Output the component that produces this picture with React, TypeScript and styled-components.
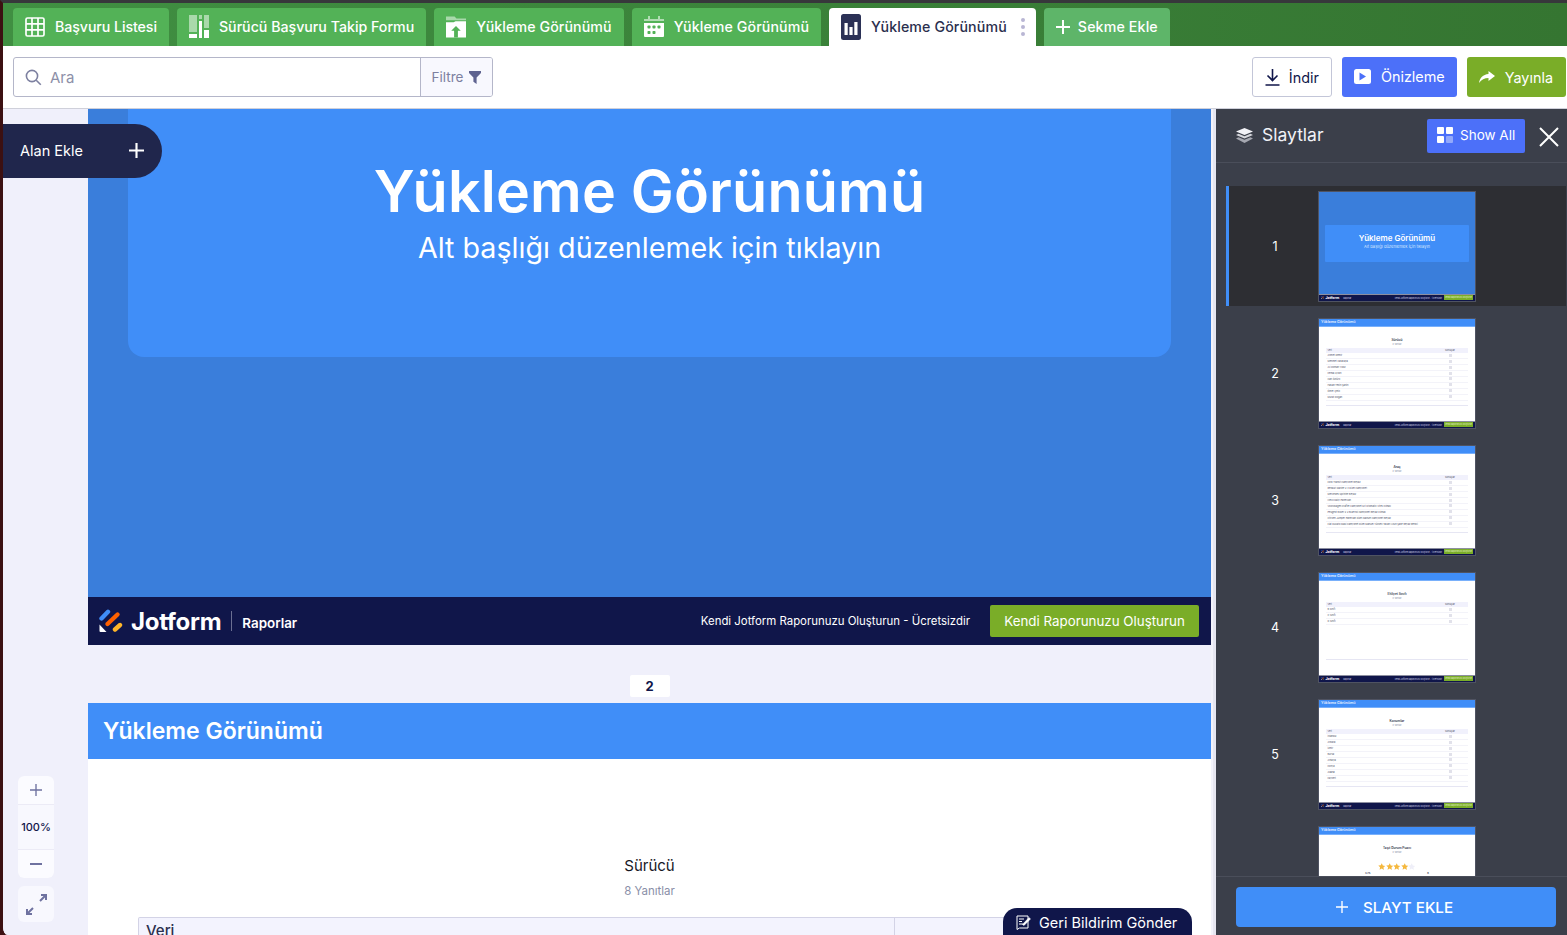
import React from 'react';
import styled, { createGlobalStyle } from 'styled-components';

const GlobalStyle = createGlobalStyle`
  * {
    box-sizing: border-box;
  }

  html,
  body {
    margin: 0;
    padding: 0;
    height: 100%;
    overflow: hidden;
    background-color: #3c1012;
    font-family: Inter, "Noto Sans", "Liberation Sans", sans-serif;
  }
`;

const COLOUR = {
  navy: '#10164a',
  navy2: '#20264c',
  blue: '#408ef8',
  blueDark: '#3a7edb',
  indigo: '#4c70f9',
  green: '#7aad28',
  tabGreen: '#53b257',
  canvas: '#f0f0fb',
  panel: '#3b3f4a',
  muted: '#8a8fa8',
};

const Frame = styled.div`
  width: 1567px;
  height: 935px;
  display: flex;
  flex-direction: column;
  overflow: hidden;
  border-top: 3px solid #37373b;
  border-left: 3px solid #3c1012;
  border-bottom-left-radius: 8px;
  background-color: ${COLOUR.canvas};
`;

/* tabs */

const TabBar = styled.nav`
  height: 43px;
  flex: none;
  display: flex;
  align-items: flex-end;
  gap: 8px;
  padding-left: 10px;
  background: linear-gradient(90deg, #408f42 0%, #357531 100%);
`;

const Tab = styled.div<{ $active?: boolean; $add?: boolean; $track?: number }>`
  height: 38px;
  display: flex;
  align-items: center;
  gap: ${(p) => (p.$add ? '8px' : '10px')};
  padding: 0 12px 1px;
  border-radius: 4px 4px 0 0;
  font-size: 14.2px;
  font-weight: 500;
  letter-spacing: ${(p) => p.$track ?? 0}px;
  white-space: nowrap;
  color: ${(p) => (p.$active ? '#2b2f4e' : '#fff')};
  background-color: ${(p) =>
    p.$active ? '#fff' : p.$add ? '#5eb569' : COLOUR.tabGreen};
`;

const TabDots = styled.span`
  display: flex;
  flex-direction: column;
  gap: 3px;
  margin-left: 4px;
  margin-right: -1px;

  & > i {
    width: 4px;
    height: 4px;
    border-radius: 50%;
    background-color: #b9b6d4;
  }
`;

/* toolbar */

const Toolbar = styled.header`
  height: 63px;
  flex: none;
  display: flex;
  align-items: center;
  justify-content: space-between;
  padding: 0 1px 0 10px;
  background-color: #fff;
  border-bottom: 1px solid #cfd0da;
`;

const SearchBox = styled.div`
  width: 480px;
  height: 40px;
  display: flex;
  border: 1px solid #b4b6c9;
  border-radius: 3px;
  overflow: hidden;
`;

const SearchField = styled.div`
  flex: 1;
  display: flex;
  align-items: center;
  gap: 8px;
  padding-left: 11px;
  font-size: 15px;
  color: #8d90a8;
`;

const FilterButton = styled.div`
  width: 72px;
  display: flex;
  align-items: center;
  justify-content: center;
  gap: 6px;
  font-size: 13.5px;
  color: #7d80a0;
  background-color: #f8f8fe;
  border-left: 1px solid #b4b6c9;
`;

const ToolbarActions = styled.div`
  display: flex;
  gap: 10px;
`;

const ActionButton = styled.div<{ $kind: 'outline' | 'indigo' | 'green' }>`
  height: 40px;
  display: flex;
  align-items: center;
  gap: ${(p) => (p.$kind === 'outline' ? '9px' : '10px')};
  padding: 0 ${(p) => (p.$kind === 'green' ? '13px' : '12px')}
    ${(p) => (p.$kind === 'indigo' ? '2px' : '0')} 12px;
  border-radius: 3px;
  font-size: 14.4px;
  color: ${(p) => (p.$kind === 'outline' ? COLOUR.navy : '#fff')};
  border: ${(p) => (p.$kind === 'outline' ? '1px solid #c3c6d8' : 'none')};
  background-color: ${(p) =>
    p.$kind === 'outline'
      ? '#fff'
      : p.$kind === 'indigo'
        ? COLOUR.indigo
        : COLOUR.green};
`;

/* main */

const Body = styled.div`
  flex: 1;
  min-height: 0;
  display: flex;
`;

const Canvas = styled.main`
  position: relative;
  width: 1208px;
  flex: none;
  padding-left: 85px;
  overflow: hidden;
  background-color: ${COLOUR.canvas};
`;

const Divider = styled.div`
  width: 5px;
  flex: none;
  background-color: #e6e6f1;
  border-left: 2px solid #f3f3fb;
`;

const SlideOne = styled.section`
  width: 1123px;
  height: 536px;
  display: flex;
  flex-direction: column;
  background-color: ${COLOUR.blueDark};
`;

const SlideStage = styled.div`
  flex: 1;
  padding: 0 40px;
`;

const TitleCard = styled.div`
  height: 248px;
  padding-top: 45px;
  text-align: center;
  color: #fff;
  background-color: ${COLOUR.blue};
  border-radius: 0 0 16px 16px;
`;

const SlideTitle = styled.h1`
  margin: 0;
  font-size: 57.4px;
  line-height: 74px;
  font-weight: 600;
  letter-spacing: 0.2px;
`;

const SlideSubtitle = styled.p`
  margin: 2px 0 0;
  font-size: 28.7px;
  line-height: 36px;
  font-weight: 400;
`;

const ReportFooter = styled.footer`
  height: 48px;
  flex: none;
  display: flex;
  align-items: center;
  padding: 0 12px 0 11px;
  color: #fff;
  background-color: ${COLOUR.navy};
`;

const BrandName = styled.span`
  margin-left: 8px;
  font-size: 24px;
  font-weight: 700;
  letter-spacing: -0.3px;
`;

const BrandTag = styled.span`
  height: 20px;
  margin-left: 10px;
  padding: 2px 0 0 10px;
  border-left: 1px solid #6b6f92;
  font-size: 13.4px;
  line-height: 20px;
  font-weight: 600;
`;

const FooterNote = styled.span`
  margin-left: auto;
  font-size: 11.4px;
`;

const FooterButton = styled.div`
  width: 209px;
  height: 32px;
  margin-left: 20px;
  display: flex;
  align-items: center;
  justify-content: center;
  border-radius: 2px;
  font-size: 13.35px;
  background-color: ${COLOUR.green};
`;

const PageRow = styled.div`
  height: 58px;
  display: flex;
  justify-content: center;
  padding-top: 30px;
  width: 1123px;
`;

const PageBadge = styled.div`
  width: 40px;
  height: 22px;
  display: flex;
  align-items: center;
  justify-content: center;
  font-size: 13px;
  font-weight: 700;
  color: ${COLOUR.navy};
  background-color: #fff;
  border-radius: 2px;
`;

const SlideTwo = styled.section`
  width: 1123px;
  height: 400px;
  background-color: #fff;
`;

const SlideHeader = styled.div`
  height: 56px;
  display: flex;
  align-items: center;
  padding-left: 15px;
  font-size: 23px;
  font-weight: 600;
  color: #fff;
  background-color: ${COLOUR.blue};
`;

const QuestionTitle = styled.h2`
  margin: 96px 0 0;
  text-align: center;
  font-size: 15px;
  line-height: 22px;
  font-weight: 400;
  color: #17171f;
`;

const QuestionCount = styled.p`
  margin: 7px 0 0;
  text-align: center;
  font-size: 11.5px;
  line-height: 14px;
  color: ${COLOUR.muted};
`;

const DataTable = styled.div`
  margin: 19px 50px 0;
  display: grid;
  grid-template-columns: 756px 1fr;
  height: 60px;
  border: 1px solid #d3d3e6;
  border-bottom: 0;
  border-radius: 2px 2px 0 0;
  background-color: #f3f3fe;
`;

const DataHead = styled.div`
  padding: 4px 7px;
  font-size: 15px;
  line-height: 18px;
  font-weight: 500;
  color: #2b2f4e;
  border-right: 1px solid #d3d3e6;
`;

/* overlays on the canvas */

const AddFieldPill = styled.div`
  position: absolute;
  top: 15px;
  left: 0;
  width: 159px;
  height: 54px;
  display: flex;
  align-items: center;
  justify-content: space-between;
  padding: 0 18px 2px 17px;
  color: #fff;
  font-size: 14.5px;
  background-color: ${COLOUR.navy2};
  border-radius: 0 27px 27px 0;
`;

const ZoomDock = styled.div`
  position: absolute;
  left: 15px;
  bottom: 13px;
  width: 36px;
  display: flex;
  flex-direction: column;
  gap: 8px;
`;

const ZoomGroup = styled.div`
  display: flex;
  flex-direction: column;
  gap: 1px;
  border-radius: 6px;
  overflow: hidden;
  background-color: #ecebf6;
`;

const ZoomCell = styled.div<{ $tall?: boolean; $tint?: boolean }>`
  height: ${(p) => (p.$tall ? '44px' : '28px')};
  display: flex;
  align-items: center;
  justify-content: center;
  font-size: 11px;
  font-weight: 500;
  color: ${COLOUR.navy};
  background-color: ${(p) => (p.$tint ? '#f8f8fe' : '#fbfbff')};
`;

const ExpandButton = styled(ZoomCell)`
  height: 36px;
  border-radius: 6px;
`;

const FeedbackTab = styled.div`
  position: absolute;
  right: 19px;
  bottom: 0;
  width: 189px;
  height: 27px;
  display: flex;
  align-items: center;
  gap: 8px;
  padding: 2px 0 0 13px;
  color: #fff;
  font-size: 14.5px;
  background-color: ${COLOUR.navy};
  border-radius: 14px 14px 0 0;
`;

/* slides panel */

const Panel = styled.aside`
  width: 351px;
  flex: none;
  display: flex;
  flex-direction: column;
  background-color: ${COLOUR.panel};
`;

const PanelHeader = styled.div`
  height: 54px;
  flex: none;
  display: flex;
  align-items: center;
  padding: 0 8px 0 20px;
  border-bottom: 1px solid #4a4e5a;
`;

const PanelTitle = styled.h3`
  margin: 0 auto 2px 9px;
  font-size: 17.5px;
  font-weight: 400;
  color: #f2f2f7;
`;

const ShowAll = styled.div`
  width: 98px;
  height: 34px;
  margin-right: 14px;
  display: flex;
  align-items: center;
  gap: 7px;
  padding: 0 0 1px 10px;
  font-size: 13.5px;
  color: #fff;
  background-color: ${COLOUR.indigo};
  border-radius: 2px;
`;

const CloseGlyph = styled.svg`
  margin-top: 2px;
`;

const SlideList = styled.div`
  flex: 1;
  min-height: 0;
  overflow: hidden;
  display: flex;
  flex-direction: column;
  gap: 7px;
  padding: 23px 1px 0 10px;
`;

const SlideItem = styled.div<{ $current?: boolean }>`
  height: 120px;
  flex: none;
  display: flex;
  align-items: center;
  border-left: 3px solid ${(p) => (p.$current ? COLOUR.blue : 'transparent')};
  background-color: ${(p) => (p.$current ? '#2d2e33' : 'transparent')};
`;

const SlideNumber = styled.span`
  width: 89px;
  padding-left: 3px;
  text-align: center;
  font-size: 12.5px;
  color: #fff;
`;

const PanelFooter = styled.div`
  height: 59px;
  flex: none;
  padding: 10px 11px 9px 20px;
  border-top: 1px solid #4a4e5a;
`;

const AddSlide = styled.div`
  height: 40px;
  display: flex;
  align-items: center;
  justify-content: center;
  gap: 15px;
  padding-right: 3px;
  color: #fff;
  font-size: 15.2px;
  font-weight: 500;
  background-color: ${COLOUR.blue};
  border-radius: 4px;
`;

/* thumbnails */

const Thumb = styled.div<{ $cover?: boolean }>`
  width: 158px;
  height: 111px;
  flex: none;
  display: flex;
  flex-direction: column;
  overflow: hidden;
  border: 1px solid #4f5362;
  background-color: ${(p) => (p.$cover ? COLOUR.blueDark : '#fff')};
`;

const ThumbHeader = styled.div`
  height: 8px;
  flex: none;
  padding-left: 2px;
  font-size: 3.6px;
  line-height: 7px;
  font-weight: 600;
  color: #e8f0ff;
  background-color: ${COLOUR.blue};
  border-bottom: 1px solid #79b0fb;
`;

const ThumbMain = styled.div`
  flex: 1;
  min-height: 0;
  padding: 11.5px 7px 0;
`;

const ThumbTitle = styled.div`
  text-align: center;
  font-size: 3.2px;
  line-height: 4px;
  font-weight: 600;
  color: #30324a;
`;

const ThumbCount = styled.div`
  text-align: center;
  font-size: 2px;
  line-height: 3px;
  margin: 1px 0 1.5px;
  color: ${COLOUR.muted};
`;

const ThumbTable = styled.div`
  height: 58px;
  border-bottom: 1px solid #e6e6f3;
`;

const ThumbRow = styled.div<{ $head?: boolean }>`
  height: 5.9px;
  display: grid;
  grid-template-columns: 106px 1fr;
  align-items: center;
  font-size: 2.4px;
  color: #50526a;
  background-color: ${(p) => (p.$head ? '#f1f1fc' : '#fff')};
  border-bottom: ${(p) => (p.$head ? '0' : '1px solid #f3f3f9')};

  & > span:first-child {
    padding-left: 1.5px;
    white-space: nowrap;
  }

  & > span:last-child {
    text-align: center;
  }
`;

const ThumbValue = styled.b`
  display: inline-block;
  width: 3px;
  height: 3px;
  background-color: #e1e1ea;
`;

const ThumbFooter = styled.div`
  height: 7px;
  flex: none;
  display: flex;
  align-items: center;
  padding: 0 2px;
  font-size: 2px;
  color: #d7d9ea;
  background-color: ${COLOUR.navy};
  border-top: 1px solid #8d8fa0;
`;

const ThumbBrand = styled.span`
  margin-left: 1.5px;
  font-size: 3.6px;
  font-weight: 700;
  color: #fff;
`;

const ThumbTag = styled.span`
  margin-left: 4px;
`;

const ThumbNote = styled.span`
  margin-left: auto;
`;

const ThumbCta = styled.span`
  width: 29px;
  height: 5px;
  margin-left: 2px;
  text-align: center;
  line-height: 5px;
  font-size: 2px;
  color: #e5f1d0;
  background-color: ${COLOUR.green};
`;

const CoverStage = styled.div`
  flex: 1;
  padding: 33px 6px 0;
`;

const CoverCard = styled.div`
  height: 37px;
  padding-top: 9px;
  text-align: center;
  color: #fff;
  background-color: ${COLOUR.blue};
  border-radius: 1px;
`;

const CoverTitle = styled.div`
  font-size: 8px;
  line-height: 9px;
  font-weight: 600;
`;

const CoverSubtitle = styled.div`
  margin-top: 1px;
  font-size: 4.1px;
  line-height: 5px;
  color: #d7e6ff;
`;

const Stars = styled.div`
  display: flex;
  justify-content: center;
  margin-top: 9px;
`;

const RatingRow = styled.div`
  display: flex;
  justify-content: space-between;
  padding: 0 39px;
  font-size: 2.6px;
  font-weight: 600;
  color: #30324a;
`;

/* icons */

const GridIcon = () => (
  <svg width="20" height="20" viewBox="0 0 20 20" fill="none" stroke="#fff" strokeWidth="1.7">
    <rect x="1" y="1" width="18" height="18" rx="1.5" />
    <path d="M1 6.8h18M1 12.8h18M7 1v18M13 1v18" />
  </svg>
);

const ColumnsIcon = () => (
  <svg width="20" height="23" viewBox="0 0 20 23" fill="#fff">
    <rect x="0" y="0" width="8" height="17" opacity=".5" />
    <rect x="0" y="19" width="8" height="4" />
    <rect x="10" y="0" width="3" height="4" opacity=".5" />
    <rect x="10" y="6" width="3" height="17" />
    <rect x="15" y="0" width="5" height="13" opacity=".5" />
    <rect x="15" y="15" width="5" height="8" />
  </svg>
);

const FolderIcon = () => (
  <svg width="20" height="22" viewBox="0 0 21 22">
    <path d="M0 0h9l2 2h10v2H0z" fill="#fff" opacity=".5" />
    <path d="M0 6h8l2-1h11v17H0z" fill="#fff" />
    <path d="M10.5 10l5 5h-3v7h-4v-7h-3z" fill={COLOUR.tabGreen} />
  </svg>
);

const CalendarIcon = () => (
  <svg width="20" height="21" viewBox="0 0 20 21">
    <path d="M0 3h20v2H0z M4 0h2v3H4z M14 0h2v3h-2z" fill="#fff" opacity=".55" />
    <path d="M0 7h20v13a1 1 0 0 1-1 1H1a1 1 0 0 1-1-1z" fill="#fff" />
    <g fill={COLOUR.tabGreen}>
      <rect x="3.5" y="9.5" width="3" height="3" rx=".8" />
      <rect x="8.5" y="9.5" width="3" height="3" rx=".8" />
      <rect x="13.5" y="9.5" width="3" height="3" rx=".8" />
      <rect x="3.5" y="15" width="3" height="3" rx=".8" />
      <rect x="8.5" y="15" width="3" height="3" rx=".8" />
    </g>
  </svg>
);

const ReportIcon = () => (
  <svg width="20" height="26" viewBox="0 0 20 26">
    <rect width="20" height="26" rx="2.5" fill="#2b3156" />
    <rect x="3.5" y="9" width="3.2" height="12" fill="#fff" />
    <rect x="8.4" y="13" width="3.2" height="8" fill="#fff" />
    <rect x="13.3" y="8" width="3.2" height="13" fill="#fff" />
  </svg>
);

const Plus = ({ size = 14, color = '#fff', weight = 2 }: { size?: number; color?: string; weight?: number }) => (
  <svg width={size} height={size} viewBox="0 0 14 14" stroke={color} strokeWidth={weight} fill="none">
    <path d="M7 0v14M0 7h14" />
  </svg>
);

const SearchIcon = () => (
  <svg width="17" height="17" viewBox="0 0 17 17" fill="none" stroke="#7d80a0" strokeWidth="1.6">
    <circle cx="7" cy="7" r="5.6" />
    <path d="M11.2 11.2l4.6 4.6" />
  </svg>
);

const FunnelIcon = () => (
  <svg width="12" height="13" viewBox="0 0 12 13" fill="#5f6390">
    <path d="M0 0h12v2L7.6 6.6V13L4.4 10.8V6.6L0 2z" />
  </svg>
);

const DownloadIcon = () => (
  <svg width="15" height="17" viewBox="0 0 15 17" fill="none" stroke={COLOUR.navy} strokeWidth="1.6">
    <path d="M7.5 0v11M2.5 6.5l5 5 5-5M0.5 16h14" />
  </svg>
);

const PlayIcon = () => (
  <svg width="17" height="15" viewBox="0 0 17 15">
    <rect width="17" height="15" rx="2.5" fill="#fff" />
    <path d="M5.5 3.5l6.5 4-6.5 4z" fill={COLOUR.indigo} />
  </svg>
);

const ShareIcon = () => (
  <svg width="16" height="12" viewBox="0 0 16 12" fill="#fff">
    <path d="M9.5 0L16 5l-6.5 5V7C5.500 7 2.500 8.500 0 12c.8-5 4-8.500 9.500-9z" />
  </svg>
);

const LayersIcon = () => (
  <svg width="17" height="15" viewBox="0 0 17 15">
    <path d="M8.5 0L17 3.5 8.5 7 0 3.5z" fill="#f2f2f7" />
    <path d="M2.5 5.8L8.5 8.2l6-2.4L17 7 8.5 10.500 0 7z" fill="#d5d6dc" />
    <path d="M2.5 9.3L8.5 11.7l6-2.4L17 10.500 8.500 15 0 10.500z" fill="#a5a7b0" />
  </svg>
);

const TilesIcon = () => (
  <svg width="16" height="16" viewBox="0 0 16 16" fill="#fff">
    <rect width="7" height="7" rx="1" />
    <rect x="9" width="7" height="7" rx="1" />
    <rect y="9" width="7" height="7" rx="1" />
    <rect x="9" y="9" width="7" height="7" rx="1" opacity=".4" />
  </svg>
);

const CloseIcon = () => (
  <CloseGlyph width="20" height="20" viewBox="0 0 20 20" stroke="#fff" strokeWidth="2" fill="none">
    <path d="M1 1l18 18M19 1L1 19" />
  </CloseGlyph>
);

const ExpandIcon = () => (
  <svg width="21" height="21" viewBox="0 0 21 21" fill="none" stroke="#6f72a0" strokeWidth="2">
    <path d="M15 1h5v5M20 1l-6 6M1 15v5h5M1 20l6-6" />
  </svg>
);

const FeedbackIcon = () => (
  <svg width="15" height="15" viewBox="0 0 15 15" fill="none" stroke="#fff" strokeWidth="1">
    <path d="M1 1h11v12H3.5L1 14.5zM3 4h5M3 6.5h3M3 9h4" />
    <path d="M6.5 9.500L13 2.500l1.500 1.500L8 10.500z" fill="#fff" strokeWidth=".5" />
  </svg>
);

const JotformMark = ({ size = 24 }: { size?: number }) => (
  <svg width={size} height={size} viewBox="0 0 24 24">
    <path d="M2.5 9.5L9 2.8" stroke="#408ef8" strokeWidth="4.4" strokeLinecap="round" />
    <path d="M8.5 15L18.5 5.5" stroke="#ff6100" strokeWidth="4.4" strokeLinecap="round" />
    <path d="M16 20.5L21 16" stroke="#ffb629" strokeWidth="4.4" strokeLinecap="round" />
    <path d="M0.5 15.5L7.5 23H1.5a1 1 0 0 1-1-1z" fill="#fff" />
  </svg>
);

const Star = ({ filled }: { filled: boolean }) => (
  <svg width="7.5" height="7.5" viewBox="0 0 24 24" fill={filled ? '#f5b83d' : '#efeff8'}>
    <path d="M12 1l3.4 7.2 7.6 1-5.6 5.4 1.5 7.8L12 17.600l-6.900 3.800 1.500-7.800L1 8.200l7.600-1z" />
  </svg>
);

/* data */

type TableSlide = {
  id: number;
  title: string;
  count: string;
  rows?: string[];
  rating?: boolean;
};

const tableSlides: TableSlide[] = [
  {
    id: 2,
    title: 'Sürücü',
    count: '8 Yanıtlar',
    rows: [
      'Ahmet Demir',
      'Mehmet Karakaya',
      'Ali Osman Yıldız',
      'Kemal Aydın',
      'Can Öztürk',
      'Hasan Tekin Şahin',
      'Ömer Çelik',
      'Murat Doğan',
    ],
  },
  {
    id: 3,
    title: 'Araç',
    count: '8 Yanıtlar',
    rows: [
      'Ford Transit Kamyonet Beyaz',
      'Renault Master 2.3 Dizel Kamyonet',
      'Mercedes Sprinter Beyaz',
      'Iveco Daily Panelvan',
      'Volkswagen Crafter Kamyonet Gri Otomatik Vites Klimalı',
      'Peugeot Boxer 2.2 BlueHDi Kamyonet Beyaz Klimalı',
      'Citroen Jumper Panelvan Dizel Manuel Kamyonet Beyaz',
      'Fiat Ducato Maxi Kamyonet Dizel Manuel Yüksek Tavan Uzun Şase Beyaz Renkli',
    ],
  },
  {
    id: 4,
    title: 'Ehliyet Sınıfı',
    count: '8 Yanıtlar',
    rows: ['B Sınıfı', 'C Sınıfı', 'D Sınıfı'],
  },
  {
    id: 5,
    title: 'Konumlar',
    count: '8 Yanıtlar',
    rows: ['İstanbul', 'Ankara', 'İzmir', 'Bursa', 'Antalya', 'Konya', 'Adana', 'Kayseri'],
  },
  { id: 6, title: 'Taşıt Durum Puanı', count: '8 Yanıtlar', rating: true },
];

const MiniFooter = () => (
  <ThumbFooter>
    <JotformMark size={3} />
    <ThumbBrand>Jotform</ThumbBrand>
    <ThumbTag>Raporlar</ThumbTag>
    <ThumbNote>Kendi Jotform Raporunuzu Oluşturun - Ücretsizdir</ThumbNote>
    <ThumbCta>Kendi Raporunuzu Oluşturun</ThumbCta>
  </ThumbFooter>
);

const App: React.FC = () => {
  return (
    <Frame>
      <GlobalStyle />
      <TabBar>
        <Tab $track={-0.07}>
          <GridIcon />
          Başvuru Listesi
        </Tab>
        <Tab>
          <ColumnsIcon />
          Sürücü Başvuru Takip Formu
        </Tab>
        <Tab $track={0.1}>
          <FolderIcon />
          Yükleme Görünümü
        </Tab>
        <Tab $track={0.1}>
          <CalendarIcon />
          Yükleme Görünümü
        </Tab>
        <Tab $active $track={0.12}>
          <ReportIcon />
          Yükleme Görünümü
          <TabDots>
            <i />
            <i />
            <i />
          </TabDots>
        </Tab>
        <Tab $add $track={0.15}>
          <Plus />
          Sekme Ekle
        </Tab>
      </TabBar>

      <Toolbar>
        <SearchBox>
          <SearchField>
            <SearchIcon />
            Ara
          </SearchField>
          <FilterButton>
            Filtre
            <FunnelIcon />
          </FilterButton>
        </SearchBox>
        <ToolbarActions>
          <ActionButton $kind="outline">
            <DownloadIcon />
            İndir
          </ActionButton>
          <ActionButton $kind="indigo">
            <PlayIcon />
            Önizleme
          </ActionButton>
          <ActionButton $kind="green">
            <ShareIcon />
            Yayınla
          </ActionButton>
        </ToolbarActions>
      </Toolbar>

      <Body>
        <Canvas>
          <SlideOne>
            <SlideStage>
              <TitleCard>
                <SlideTitle>Yükleme Görünümü</SlideTitle>
                <SlideSubtitle>Alt başlığı düzenlemek için tıklayın</SlideSubtitle>
              </TitleCard>
            </SlideStage>
            <ReportFooter>
              <JotformMark />
              <BrandName>Jotform</BrandName>
              <BrandTag>Raporlar</BrandTag>
              <FooterNote>Kendi Jotform Raporunuzu Oluşturun - Ücretsizdir</FooterNote>
              <FooterButton>Kendi Raporunuzu Oluşturun</FooterButton>
            </ReportFooter>
          </SlideOne>
          <PageRow>
            <PageBadge>2</PageBadge>
          </PageRow>
          <SlideTwo>
            <SlideHeader>Yükleme Görünümü</SlideHeader>
            <QuestionTitle>Sürücü</QuestionTitle>
            <QuestionCount>8 Yanıtlar</QuestionCount>
            <DataTable>
              <DataHead>Veri</DataHead>
            </DataTable>
          </SlideTwo>

          <AddFieldPill>
            Alan Ekle
            <Plus size={15} />
          </AddFieldPill>

          <ZoomDock>
            <ZoomGroup>
              <ZoomCell>
                <Plus size={12} color="#6f72a0" weight={1.6} />
              </ZoomCell>
              <ZoomCell $tall $tint>
                100%
              </ZoomCell>
              <ZoomCell>
                <svg width="12" height="2" viewBox="0 0 12 2">
                  <rect width="12" height="2" fill="#6f72a0" />
                </svg>
              </ZoomCell>
            </ZoomGroup>
            <ExpandButton $tint>
              <ExpandIcon />
            </ExpandButton>
          </ZoomDock>

          <FeedbackTab>
            <FeedbackIcon />
            Geri Bildirim Gönder
          </FeedbackTab>
        </Canvas>

        <Divider />

        <Panel>
          <PanelHeader>
            <LayersIcon />
            <PanelTitle>Slaytlar</PanelTitle>
            <ShowAll>
              <TilesIcon />
              Show All
            </ShowAll>
            <CloseIcon />
          </PanelHeader>

          <SlideList>
            <SlideItem $current>
              <SlideNumber>1</SlideNumber>
              <Thumb $cover>
                <CoverStage>
                  <CoverCard>
                    <CoverTitle>Yükleme Görünümü</CoverTitle>
                    <CoverSubtitle>Alt başlığı düzenlemek için tıklayın</CoverSubtitle>
                  </CoverCard>
                </CoverStage>
                <MiniFooter />
              </Thumb>
            </SlideItem>
            {tableSlides.map((slide) => (
              <SlideItem key={slide.id}>
                <SlideNumber>{slide.id}</SlideNumber>
                <Thumb>
                  <ThumbHeader>Yükleme Görünümü</ThumbHeader>
                  <ThumbMain>
                    <ThumbTitle>{slide.title}</ThumbTitle>
                    <ThumbCount>{slide.count}</ThumbCount>
                    {slide.rows && (
                      <ThumbTable>
                        <ThumbRow $head>
                          <span>Veri</span>
                          <span>Sonuçlar</span>
                        </ThumbRow>
                        {slide.rows.map((row) => (
                          <ThumbRow key={row}>
                            <span>{row}</span>
                            <span>
                              <ThumbValue />
                            </span>
                          </ThumbRow>
                        ))}
                      </ThumbTable>
                    )}
                    {slide.rating && (
                      <>
                        <Stars>
                          {[0, 1, 2, 3, 4].map((i) => (
                            <Star key={i} filled={i < 4} />
                          ))}
                        </Stars>
                        <RatingRow>
                          <span>3.75</span>
                          <span>8</span>
                        </RatingRow>
                      </>
                    )}
                  </ThumbMain>
                  <MiniFooter />
                </Thumb>
              </SlideItem>
            ))}
          </SlideList>

          <PanelFooter>
            <AddSlide>
              <Plus size={12} weight={1.6} />
              SLAYT EKLE
            </AddSlide>
          </PanelFooter>
        </Panel>
      </Body>
    </Frame>
  );
};

export default App;
